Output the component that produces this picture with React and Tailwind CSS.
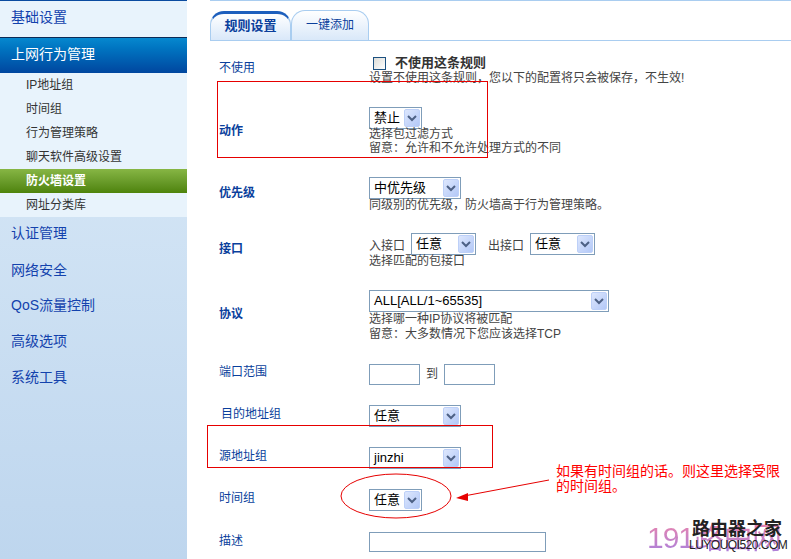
import React from "react"

const cjk = "font-['Liberation_Sans','Noto_Sans_CJK_SC',sans-serif]"

const subItems = ["IP地址组", "时间组", "行为管理策略", "聊天软件高级设置"]
const lowerItems = [
  { name: "认证管理", h: "h-[37px]" },
  { name: "网络安全", h: "h-[36px]" },
  { name: "QoS流量控制", h: "h-[35px]" },
  { name: "高级选项", h: "h-[36px]" },
  { name: "系统工具", h: "h-[36px]" },
]

// Old style select: thin border with a pale blue arrow button
function FakeSelect({ width, value }) {
  return (
    <div className={`${width} h-[22px] flex items-center justify-between border border-[#7f9db9] bg-white pl-[4px] pr-px text-[13px] text-black`}>
      <span>{value}</span>
      <span className="w-[16px] h-[18px] flex items-center justify-center rounded-[2px] bg-gradient-to-br from-[#dde7fd] to-[#b3c8f7] border border-[#bdd0f8]">
        <svg width="10" height="7" viewBox="0 0 10 7">
          <path d="M1 1 L5 5 L9 1" fill="none" stroke="#4d6185" strokeWidth="2" />
        </svg>
      </span>
    </div>
  )
}

function Row({ label, bold, pt, labelClass = "pb-[4px]", children }) {
  return (
    <div className={`flex items-center ${pt}`}>
      <div className={`w-[159px] shrink-0 pl-[9px] text-[#0a3f9c] ${labelClass} ${bold ? "font-bold" : ""}`}>{label}</div>
      <div className="flex-1 text-[12px] leading-[14px] text-[#444]">{children}</div>
    </div>
  )
}

export default function App() {
  return (
    <div className={`${cjk} relative w-[791px] h-[559px] overflow-hidden bg-white text-[12px] flex`}>
      {/* Sidebar */}
      <aside className="w-[187px] h-full shrink-0 flex flex-col border-t border-[#0a4ba0] bg-gradient-to-b from-[#dcebf8] to-[#bed6ee] text-[14px] text-[#1342ad]">
        <div className="h-[36px] pl-[11px] pb-[4px] flex items-center bg-[#e8f3fc]">基础设置</div>
        <div className="h-[36px] pl-[11px] pb-[2px] flex items-center border-t border-[#0b2b57] bg-gradient-to-b from-[#0788cf] to-[#00469f] text-white">上网行为管理</div>
        <div className="flex flex-col bg-[#e8f3fc] text-[12px] text-[#333]">
          {subItems.map((item) => (
            <div key={item} className="h-[24px] pl-[26px] flex items-center">{item}</div>
          ))}
          <div className="h-[24px] pl-[26px] flex items-center font-bold text-white bg-gradient-to-b from-[#87b644] to-[#4e8309]">防火墙设置</div>
          <div className="h-[24px] pl-[26px] flex items-center">网址分类库</div>
        </div>
        <div className="flex flex-col">
          {lowerItems.map((item) => (
            <div key={item.name} className={`${item.h} pl-[11px] pb-[4px] flex items-center`}>{item.name}</div>
          ))}
        </div>
      </aside>

      {/* Main panel */}
      <main className="flex-1 ml-[23px]">
        <div className="h-[1px] bg-[#a9cdf0]" />
        <div className="h-[40px] flex items-end border-b border-[#a9cdf0]">
          <div className="w-[81px] h-[29px] pb-[2px] flex items-center justify-center rounded-t-[14px] border border-b-0 border-[#a9cdf0] border-t-[3px] border-t-[#1d5fbd] bg-gradient-to-b from-white to-[#d9e8f9] font-bold text-[13px] text-[#0a3f9c]">规则设置</div>
          <div className="w-[78px] h-[30px] pb-[2px] flex items-center justify-center rounded-t-[14px] border border-b-0 border-[#a9cdf0] bg-gradient-to-b from-white to-[#d9e8f9] text-[#0a3f9c]">一键添加</div>
        </div>

        <div className="flex flex-col">
          <Row label="不使用" pt="pt-[15px]" labelClass="pb-[6px]">
            <div className="flex items-center h-[14px] pl-[4px] gap-[9px]">
              <span className="w-[13px] h-[13px] border border-[#1c5180] bg-gradient-to-br from-[#dcdcd7] to-white" />
              <span className="font-bold text-[13px] text-[#333]">不使用这条规则</span>
            </div>
            <div className="mt-[1px]">设置不使用这条规则，您以下的配置将只会被保存，不生效!</div>
          </Row>
          <Row label="动作" bold pt="pt-[22px]" labelClass="">
            <FakeSelect width="w-[53px]" value="禁止" />
            <div className="mt-[-2px]">选择包过滤方式</div>
            <div>留意：允许和不允许处理方式的不同</div>
          </Row>
          <Row label="优先级" bold pt="pt-[22px]">
            <FakeSelect width="w-[92px]" value="中优先级" />
            <div className="mt-[-1px]">同级别的优先级，防火墙高于行为管理策略。</div>
          </Row>
          <Row label="接口" bold pt="pt-[21px]">
            <div className="flex items-center gap-[6px]">
              <span className="pt-[3px]">入接口</span>
              <FakeSelect width="w-[65px]" value="任意" />
              <span className="pl-[6px] pt-[3px]">出接口</span>
              <FakeSelect width="w-[65px]" value="任意" />
            </div>
            <div className="mt-[-1px]">选择匹配的包接口</div>
          </Row>
          <Row label="协议" bold pt="pt-[22px]">
            <FakeSelect width="w-[240px]" value="ALL[ALL/1~65535]" />
            <div>选择哪一种IP协议将被匹配</div>
            <div className="mt-[1px]">留意：大多数情况下您应该选择TCP</div>
          </Row>
          <Row label="端口范围" pt="pt-[22px]">
            <div className="flex items-center gap-[6px]">
              <div className="w-[51px] h-[21px] border border-[#7f9db9] bg-white" />
              <span>到</span>
              <div className="w-[51px] h-[21px] border border-[#7f9db9] bg-white" />
            </div>
          </Row>
          <Row label={<span className="ml-[2px]">目的地址组</span>} pt="pt-[20px]">
            <FakeSelect width="w-[92px]" value="任意" />
          </Row>
          <Row label="源地址组" pt="pt-[20px]">
            <FakeSelect width="w-[92px]" value="jinzhi" />
          </Row>
          <Row label="时间组" pt="pt-[20px]">
            <FakeSelect width="w-[53px]" value="任意" />
          </Row>
          <Row label="描述" pt="pt-[21px]" labelClass="pb-[2px]">
            <div className="w-[177px] h-[20px] border border-[#7f9db9] bg-white" />
          </Row>
        </div>
      </main>

      {/* Red annotations drawn over the page */}
      <div className="absolute left-[217px] top-[81px] w-[271px] h-[77px] border border-[#e60000]" />
      <div className="absolute left-[207px] top-[425px] w-[286px] h-[43px] border border-[#e60000]" />
      <svg className="absolute left-[340px] top-[465px]" width="215" height="60" viewBox="0 0 215 60">
        <ellipse cx="56" cy="31" rx="55" ry="22" fill="none" stroke="#e60000" strokeWidth="1" />
        <path d="M209 15 L124 31" fill="none" stroke="#e60000" strokeWidth="1" />
        <path d="M116 33 L128 28 L128 36 Z" fill="#e60000" />
      </svg>
      <div className="absolute left-[556px] top-[464px] w-[226px] text-[14px] leading-[15px] text-[#f00]">如果有时间组的话。则这里选择受限的时间组。</div>

      {/* Watermark */}
      <div className="absolute left-[647px] top-[520px] text-[30px] leading-[36px] tracking-[-1px] whitespace-nowrap bg-gradient-to-b from-[#ee82a8] to-[#a47fe0] bg-clip-text text-transparent">
        191路由网
      </div>
      <div className="absolute left-[692px] top-[518px] w-[92px] text-[18px] leading-[22px] font-bold text-[#222] whitespace-nowrap">路由器之家</div>
      <div className="absolute left-[689px] top-[538px] text-[12px] leading-[14px] tracking-[-0.5px] text-[#222] whitespace-nowrap">LUYOUQI520.COM</div>
    </div>
  )
}
